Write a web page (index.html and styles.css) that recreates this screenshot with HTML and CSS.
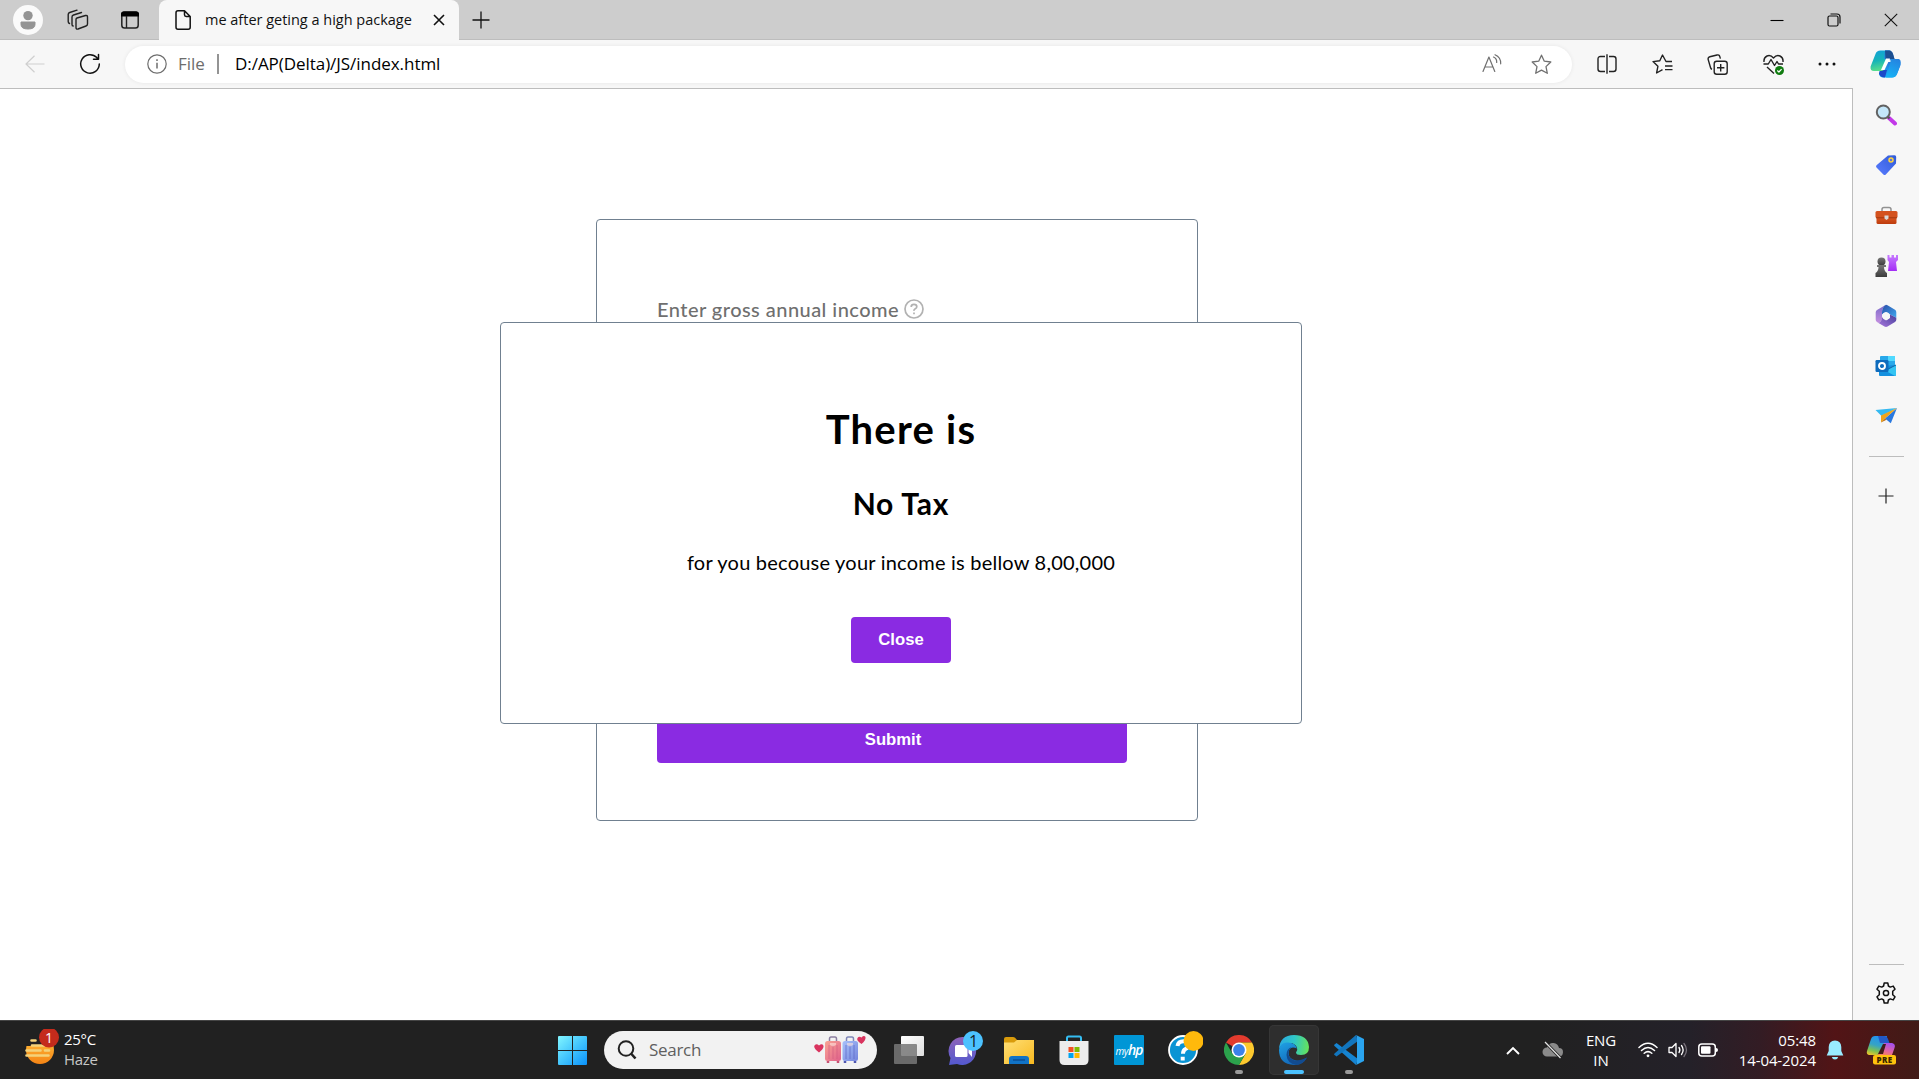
FILE: index.html
```html
<!DOCTYPE html>
<html lang="en">
<head>
<meta charset="utf-8">
<title>me after geting a high package</title>
<link rel="stylesheet" href="styles.css">
</head>
<body>
<svg class="defs" aria-hidden="true">
  <defs>
    <linearGradient id="win" x1="0" y1="0" x2="1" y2="1"><stop offset="0" stop-color="#82f6ff"/><stop offset=".5" stop-color="#43c5fd"/><stop offset="1" stop-color="#0a91fb"/></linearGradient>
    <linearGradient id="copA" x1=".2" y1="0" x2=".4" y2="1"><stop offset="0" stop-color="#12a0d8"/><stop offset=".5" stop-color="#16b4b8"/><stop offset="1" stop-color="#5ce08a"/></linearGradient>
    <linearGradient id="copB" x1=".7" y1="0" x2=".4" y2="1"><stop offset="0" stop-color="#2a72d8"/><stop offset="1" stop-color="#17b1f5"/></linearGradient>
    <linearGradient id="preA" x1=".5" y1="0" x2=".2" y2="1"><stop offset="0" stop-color="#2392ee"/><stop offset=".45" stop-color="#35a3c6"/><stop offset=".75" stop-color="#7cc152"/><stop offset="1" stop-color="#ecc52b"/></linearGradient>
    <linearGradient id="preB" x1=".7" y1="0" x2=".3" y2="1"><stop offset="0" stop-color="#a34ff0"/><stop offset=".6" stop-color="#df63a5"/><stop offset="1" stop-color="#f5805e"/></linearGradient>
    <linearGradient id="tag" x1="1" y1="0" x2="0" y2="1"><stop offset="0" stop-color="#2f5bd8"/><stop offset="1" stop-color="#5a7cff"/></linearGradient>
    <linearGradient id="box" x1="0" y1="0" x2="0" y2="1"><stop offset="0" stop-color="#e5622a"/><stop offset="1" stop-color="#bd3b0c"/></linearGradient>
    <linearGradient id="rook" x1="0" y1="0" x2="0" y2="1"><stop offset="0" stop-color="#c67bff"/><stop offset="1" stop-color="#a32df5"/></linearGradient>
    <linearGradient id="pawn" x1="0" y1="0" x2="0" y2="1"><stop offset="0" stop-color="#777"/><stop offset="1" stop-color="#3c3c3c"/></linearGradient>
    <linearGradient id="swirlLeft" x1="0" y1="0" x2="0" y2="1"><stop offset="0" stop-color="#7a6ac9"/><stop offset="1" stop-color="#c48fe0"/></linearGradient>
    <linearGradient id="swirlTop" x1="0" y1="0" x2="1" y2="1"><stop offset="0" stop-color="#2b4fa8"/><stop offset="1" stop-color="#3fa8f0"/></linearGradient>
    <linearGradient id="swirlLow" x1="0" y1="1" x2="1" y2="0"><stop offset="0" stop-color="#a877dc"/><stop offset="1" stop-color="#463f9c"/></linearGradient>
    <linearGradient id="chat" x1="0" y1="0" x2="0" y2="1"><stop offset="0" stop-color="#8f63b8"/><stop offset="1" stop-color="#5359cf"/></linearGradient>
    <linearGradient id="folder" x1="0" y1="0" x2="1" y2="1"><stop offset="0" stop-color="#ffdf76"/><stop offset="1" stop-color="#f8b91f"/></linearGradient>
    <linearGradient id="view" x1="0" y1="0" x2="1" y2="1"><stop offset="0" stop-color="#fff"/><stop offset="1" stop-color="#dedede"/></linearGradient>
    <linearGradient id="edgeTop" x1="0" y1=".4" x2="1" y2=".5"><stop offset="0" stop-color="#2aa9e4"/><stop offset=".5" stop-color="#2fc7c5"/><stop offset="1" stop-color="#66e35a"/></linearGradient>
    <linearGradient id="edgeLow" x1="0" y1="0" x2=".6" y2="1"><stop offset="0" stop-color="#1fa2e5"/><stop offset="1" stop-color="#1263b5"/></linearGradient>
    <linearGradient id="haze" x1="0" y1="0" x2="0" y2="1"><stop offset="0" stop-color="#ffc13d"/><stop offset="1" stop-color="#f58415"/></linearGradient>
    <linearGradient id="pink" x1="0" y1="0" x2="1" y2="1"><stop offset="0" stop-color="#f9a493"/><stop offset="1" stop-color="#e0608b"/></linearGradient>
    <linearGradient id="blue" x1="0" y1="0" x2="1" y2="1"><stop offset="0" stop-color="#a8c2fb"/><stop offset="1" stop-color="#7484dc"/></linearGradient>
  </defs>
</svg>

<header class="tabstrip">
  <div class="cell profile"><svg width="30" height="30" viewBox="0 0 30 30"><circle cx="15" cy="15" r="15" fill="#fafafa"/><circle cx="15" cy="10.6" r="4.7" fill="#949494"/><path d="M8 17h14v2.500q0 4.500-7 4.500t-7-4.500z" fill="#949494" stroke="#949494" stroke-linejoin="round"/></svg></div>
  <div class="cell spaces"><svg width="22" height="22" viewBox="0 0 22 22" fill="none" stroke="#222" stroke-width="1.400" stroke-linejoin="round" stroke-linecap="round"><path d="M10 9l8.500-2.500q2-.4 2 1.500v7q0 1.500-1.500 2L11 20q-2 .6-2-1.500V10.500q0-1.200 1-1.500z"/><path d="M6.200 17q-1.200 0-1.200-1.500V8q0-1.500 1.500-2l8-2.500"/><path d="M2.500 14.500Q1.200 14 1.200 12.500V5.500q0-1.500 1.500-2L10 1.200"/></svg></div>
  <div class="cell vertical"><svg width="20" height="20" viewBox="0 0 20 20"><rect x="1.800" y="2" width="16.400" height="16" rx="2.800" fill="none" stroke="#222" stroke-width="1.500"/><path d="M1 6.500V4q0-2.500 2.500-2.500h13Q19 1.500 19 4v2.500z" fill="#000"/><path d="M6.500 6v12" stroke="#222" stroke-width="1.400"/></svg></div>
  <div class="tab">
    <svg width="16" height="20" viewBox="0 0 16 20" fill="none" stroke="#111" stroke-width="1.500" stroke-linejoin="round"><path d="M3 .8h6.500l5.700 5.700v10.700q0 2-2 2H3q-2 0-2-2V2.800q0-2 2-2zM9.500.8v4q0 1.700 1.700 1.700h4"/></svg>
    <span class="tab-title">me after geting a high package</span>
    <svg class="tab-close" width="12" height="12" viewBox="0 0 12 12" stroke="#111" stroke-width="1.600"><path d="M1 1l10 10M11 1L1 11"/></svg>
  </div>
  <svg class="newtab" width="18" height="18" viewBox="0 0 18 18" stroke="#111" stroke-width="1.300"><path d="M9 .5v17M.5 9h17"/></svg>
  <div class="window-buttons">
    <svg width="14" height="14" viewBox="0 0 14 14"><path d="M.5 7.500h13" stroke="#000" stroke-width="1.100"/></svg>
    <svg width="14" height="14" viewBox="0 0 14 14" fill="none" stroke="#111" stroke-width="1.200"><rect x="1" y="3" width="10" height="10" rx="1.500"/><path d="M3.500 1H10q3 0 3 3v6.500"/></svg>
    <svg width="14" height="14" viewBox="0 0 14 14" stroke="#111" stroke-width="1.100"><path d="M.8.800l12.400 12.400M13.200.8L.8 13.200"/></svg>
  </div>
</header>

<nav class="toolbar">
  <div class="cell back"><svg width="20" height="18" viewBox="0 0 20 18" fill="none" stroke="#cfcfcf" stroke-width="1.200"><path d="M19.500 9H1M9.500.8L1 9l8.500 8.200"/></svg></div>
  <div class="cell refresh"><svg width="22" height="22" viewBox="0 0 22 22" fill="none" stroke="#111" stroke-width="1.500" stroke-linecap="round" stroke-linejoin="round"><path d="M20.300 11A9.300 9.300 0 1 1 17.800 4.600L19.300 6M19.500 1.500V6.200h-5"/></svg></div>
  <div class="address">
    <svg width="20" height="20" viewBox="0 0 20 20" fill="none" stroke="#6d6d6d" stroke-width="1.200"><circle cx="10" cy="10" r="9.200"/><path d="M10 8.800v5.700M10 5.300v1.800" stroke-width="1.500"/></svg>
    <span class="scheme">File</span><i class="bar"></i><span class="url">D:/AP(Delta)/JS/index.html</span>
    <span class="address-actions">
      <svg width="20" height="20" viewBox="0 0 20 20" fill="none" stroke="#707070" stroke-width="1.200" stroke-linecap="round" stroke-linejoin="round"><path d="M1 17.500L6.900 3l5.900 14.500M2.900 13h8M11.500 3q3.500 1.500 3.200 5.500M13 .8q6 2.500 5.700 9"/></svg>
      <svg width="21" height="21" viewBox="0 0 21 21" fill="none" stroke="#707070" stroke-width="1.300" stroke-linejoin="round"><path d="M10.500 1.200l2.800 6 6.500.8-4.800 4.600 1.300 6.700-5.800-3.200-5.800 3.200L6 12.600 1.200 8l6.500-.8z"/></svg>
    </span>
  </div>
  <div class="cell tool"><svg width="20" height="20" viewBox="0 0 20 20" fill="none" stroke="#222" stroke-width="1.400"><path d="M8 2.500H3.500q-2.500 0-2.500 2.500v10q0 2.500 2.500 2.500H8M12 2.500h4.500Q19 2.500 19 5v10q0 2.500-2.500 2.500H12M10 .3v19.400"/></svg></div>
  <div class="cell tool nudge"><svg width="21" height="20" viewBox="0 0 21 20" fill="none" stroke="#222" stroke-width="1.400" stroke-linejoin="round"><path d="M20 7.500h-6L10.500 1 7.800 6.700 1 7.600l4.900 4.700L4.600 19l5.900-3.300M13 12h7.500M13 15.600h7.500"/></svg></div>
  <div class="cell tool nudge"><svg width="21" height="21" viewBox="0 0 21 21" fill="none" stroke="#222" stroke-width="1.400" stroke-linejoin="round"><rect x="7.200" y="7.200" width="13" height="13" rx="2.500"/><path d="M13.700 10v7.400M10 13.700h7.400M5 15.300q-1.200-.5-1.500-1.800L1.200 5.600Q.6 3.400 2.800 2.800L10 1q2.300-.6 2.800 1.600l.6 2"/></svg></div>
  <div class="cell tool nudge"><svg width="21" height="21" viewBox="0 0 21 21" fill="none" stroke="#222" stroke-width="1.400" stroke-linejoin="round"><path d="M1 8Q.5 3.500 4 2t6.500 2Q13.500.500 17 2t3 6M.5 10h4.800L8 5.500l3.500 6L14 7.500 15.500 10H20M4 13l7 6.500"/><circle cx="16.500" cy="16.500" r="4.500" fill="#107c10" stroke="none"/><path d="M14.300 16.500l1.600 1.500 2.700-2.900" stroke="#fff" stroke-width="1.200"/></svg></div>
  <div class="cell tool"><svg width="18" height="6" viewBox="0 0 18 6" fill="#111"><circle cx="2" cy="3" r="1.500"/><circle cx="9" cy="3" r="1.500"/><circle cx="16" cy="3" r="1.500"/></svg></div>
  <div class="cell copilot"><svg width="31" height="28" viewBox="0 0 31 28"><path d="M13 12h16q2 1 1.200 4L27 24q-1.500 3.500-5 3.500H13q-3 0-4-3.500l2-7z" fill="url(#copB)"/><path d="M10 20h7l-2 7.500q-5 0-6-4z" fill="#1b4ac9"/><path d="M5.500 4Q6.500.500 10.500.500h10L15 18q-1 3-4 3H4Q0 21 .6 16.500z" fill="url(#copA)"/><path d="M15 .5h4q3 0 4 3.500l1.500 5H29q2.500 1 1.500 5.500L27 24q-1.500 3.500-5 3.500h-6l4.500-16Q21 9 18.500 9H14z" fill="url(#copB)"/><path d="M15 .5h4q3 0 4 3.500l1.500 5h-9z" fill="#1d4f91"/><path d="M16 8.500h4L14.500 20H11z" fill="#fff"/></svg></div>
</nav>

<div class="content">
  <main class="page">
    <section class="card">
      <label class="income-label">Enter gross annual income</label>
      <svg class="hint" width="20" height="20" viewBox="0 0 20 20" fill="none" stroke="#b2b2b2" stroke-width="1.700"><circle cx="10" cy="10" r="9"/><path d="M7.200 8q0-2.700 2.800-2.700T12.800 7.700q0 1.200-1.500 2T10 11.900M10 13.400v1.800"/></svg>
      <button class="submit">Submit</button>
    </section>
    <section class="modal">
      <h1>There is</h1>
      <h2>No Tax</h2>
      <p>for you becouse your income is bellow 8,00,000</p>
      <button class="close">Close</button>
    </section>
  </main>
  <aside class="sidebar">
    <svg width="22" height="22" viewBox="0 0 22 22"><path d="M14 14l6 5.500" stroke="#c239e8" stroke-width="4" stroke-linecap="round"/><path d="M12.500 12.500l2 2" stroke="#555" stroke-width="2"/><circle cx="8.300" cy="8" r="6.500" fill="#c4e7fa" stroke="#626262" stroke-width="2"/></svg>
    <svg width="22" height="22" viewBox="0 0 22 22"><path d="M13 1.500l6.500-.2q1.800 0 1.700 1.700L21 9.500 10.800 20.500q-1.200 1-2.400 0L1.500 13.600q-1-1.200 0-2.400z" fill="url(#tag)"/><circle cx="16" cy="6" r="2" fill="#5e75d7" stroke="#ffd33d" stroke-width="1.500"/></svg>
    <svg width="23" height="22" viewBox="0 -1 23 22"><path d="M7 6V4.500Q7 2.500 9 2.500h5q2 0 2 2V6" fill="none" stroke="#929292" stroke-width="1.500"/><rect x="1.500" y="10" width="20" height="9" rx="1.500" fill="url(#box)"/><rect x=".5" y="6" width="22" height="7" rx="1.500" fill="#d4521e"/><path d="M1 12.800h21" stroke="#a2380f"/><path d="M9.500 10.500h4v3l-2 1.500-2-1.500z" fill="#d9d9d9"/></svg>
    <svg width="24" height="24" viewBox="0 0 24 24"><path d="M13.500 1h2v2.500h2V1h2.500v2.500h2V1H24v5l-2 2 1 9h-9l1-9-1.500-2z" fill="url(#rook)"/><circle cx="7.500" cy="7.500" r="4" fill="url(#pawn)"/><path d="M3 11h9v2H10q0 4 3 6v4H1.500v-4q3-2 3-6H3z" fill="url(#pawn)"/></svg>
    <svg width="22" height="24" viewBox="0 0 22 24"><path d="M11 .8L2 6Q.7 6.800.7 8.300v7.400q0 1.500 1.300 2.300l1.500.9Q7.500 17 7 13V8.500Q7 4 11 .8z" fill="url(#swirlLeft)"/><path d="M11 .8q1 0 1.500.4L20 5.700q1.300.8 1.300 2.600v5.500L15 10.500 11 8l-4 2.500V8.300Q7.300 3 11 .8z" fill="url(#swirlTop)"/><path d="M3.500 18.900Q7 17.500 7 13l4 3.500 4-2.500V10.500l6.300 3.300v2q0 1.500-1.300 2.300l-7.500 4.400q-1.500.8-3 0z" fill="url(#swirlLow)"/><circle cx="11" cy="12" r="3.700" fill="#f7f7f7"/></svg>
    <svg width="22" height="22" viewBox="0 0 22 22"><rect x="5" y="1" width="15" height="14" rx="1" fill="#28a8ea"/><path d="M13 1h7v5h-7z" fill="#50d9ff"/><path d="M4 11l17-1v10q0 1-1 1H5q-1 0-1-1z" fill="#1490df"/><path d="M21 10v10q0 1-1 1l-9-5z" fill="#34c4f2"/><path d="M11 15l10-5" stroke="#1367a8"/><rect x=".5" y="5" width="13" height="12" rx="1.200" fill="#0f6cbd"/><circle cx="7" cy="11" r="3" fill="none" stroke="#fff" stroke-width="1.900"/></svg>
    <svg width="23" height="20" viewBox="0 0 23 20"><path d="M.5 4L22 2 6.500 10z" fill="#35b9f1"/><path d="M22 2L10 12.500l5.800 4.700z" fill="#2978df"/><path d="M22 2L6 9.500v7l4-4z" fill="#f0a51b"/><path d="M6 16.500l4-4 1.500 1.200z" fill="#b96b12"/></svg>
    <i class="rule"></i>
    <svg class="plus" width="16" height="16" viewBox="0 0 16 16" stroke="#222" stroke-width="1.200"><path d="M8 .5v15M.5 8h15"/></svg>
    <i class="rule lower"></i>
    <svg class="gear" width="22" height="22" viewBox="0 0 22 22" fill="none" stroke="#111" stroke-width="1.500" stroke-linejoin="round"><path d="M9.200 1h3.600l.6 3 1.900 1.100 2.900-1L20 7.200l-2.300 2v3.600l2.300 2-1.800 3.100-2.900-1-1.900 1.100-.6 3H9.200l-.6-3-1.900-1.100-2.900 1L2 14.800l2.300-2V9.200L2 7.200l1.800-3.100 2.900 1L8.600 4z"/><circle cx="11" cy="11" r="2.600"/></svg>
  </aside>
</div>

<footer class="taskbar">
  <div class="weather">
    <svg width="34" height="38" viewBox="0 0 34 38"><circle cx="15" cy="21" r="14" fill="url(#haze)"/><path d="M0 6h30v11H0z" fill="#212121"/><g stroke="#f4d27a" stroke-width="2.600" stroke-linecap="round"><path d="M6.500 11.500h4M7 16.500h19M1.500 21.500h14M20 21.500h4M1.500 26.500h22"/></g><circle cx="24" cy="8.500" r="10" fill="#c42b1c"/><text x="24" y="13.500" text-anchor="middle" class="badge-light">1</text></svg>
    <div class="weather-text"><span>25°C</span><span class="dim">Haze</span></div>
  </div>
  <div class="start"><svg width="29" height="29" viewBox="0 0 29 29"><path d="M0 1q0-1 1-1h13v14H0zM15 0h13q1 0 1 1v13H15zM0 15h14v14H1q-1 0-1-1zM15 15h14v13q0 1-1 1H15z" fill="url(#win)"/></svg></div>
  <div class="search">
    <svg width="20" height="20" viewBox="0 0 20 20" fill="none" stroke="#222" stroke-width="2"><circle cx="9" cy="8.500" r="7.300"/><path d="M14 13.500l4.500 5" stroke-width="2.600"/></svg>
    <span>Search</span>
    <svg class="luggage" width="52" height="30" viewBox="0 0 52 30"><path d="M5 17.500Q-1 13 .5 10.500 2.500 8 5 10.500 8 8 9.500 10.700 10 14 5 17.500z" fill="#d9345f"/><path d="M47.500 9Q42 5.500 43.500 3q1.500-2 4-.5 2.500-2.500 4-.5Q52 5.500 47.500 9z" fill="#d9345f"/><path d="M15.500 7V4q0-2 1.500-2h4q1.500 0 1.500 2v3" fill="none" stroke="#8c7fa0" stroke-width="1.500"/><rect x="11" y="6" width="16" height="20" rx="2.500" fill="url(#pink)"/><path d="M15 10v14M19 10v14M23 10v14" stroke="#d05a80" opacity=".6"/><path d="M14 26v2M24 26v2" stroke="#c65374" stroke-width="2.500"/><path d="M32.500 7V4q0-2 1.500-2h4q1.500 0 1.500 2v3" fill="none" stroke="#7f86b8" stroke-width="1.500"/><rect x="28.500" y="6" width="15.500" height="20" rx="2.500" fill="url(#blue)"/><path d="M32 10v14M36 10v14M40 10v14" stroke="#5d66c6" opacity=".7"/><path d="M31 26v2M41 26v2" stroke="#4f56b0" stroke-width="2.500"/><path d="M16 8h6v2l-3 1.500L16 10zM33 8h6v2l-3 1.500L33 10z" fill="#fde2dc" opacity=".6"/></svg>
  </div>
  <div class="apps">
    <div class="app"><svg width="30" height="30" viewBox="0 0 30 30"><rect x="7" y="1" width="23" height="20" rx="1" fill="url(#view)"/><rect x="0" y="9" width="23" height="20" rx="1" fill="#777" opacity=".85"/></svg></div>
    <div class="app"><svg width="38" height="38" viewBox="0 0 38 38"><path d="M18 6a14 14 0 1 1-6 27l-8 1 1.500-7A14 14 0 0 1 18 6z" fill="url(#chat)"/><rect x="10" y="14" width="12.500" height="12" rx="1.500" fill="#fff"/><path d="M23.500 18l3.500-4v12l-3.500-4z" fill="#fff"/><circle cx="29" cy="8.800" r="8.800" fill="none" stroke="none"/><circle cx="28" cy="10" r="10" fill="#4cc2ff"/><text x="28.500" y="15.500" text-anchor="middle" class="badge-dark">1</text></svg></div>
    <div class="app"><svg width="30" height="30" viewBox="0 0 30 30"><path d="M0 4q0-2 2-2h7q1.200 0 2 .8L14 6v6H0z" fill="#d99b0b"/><path d="M0 7.500h10L13 5h17v24H0z" fill="url(#folder)"/><path d="M5 29v-5q0-3 3-3h14q3 0 3 3v5z" fill="#1173c6"/><path d="M9 25h12" stroke="#0b4e95" stroke-width="1.500"/></svg></div>
    <div class="app"><svg width="30" height="30" viewBox="0 0 30 30"><path d="M8 7V3q0-1.500 1.500-1.500h11Q22 1.500 22 3v4" fill="none" stroke="#35bdf2" stroke-width="2"/><path d="M.5 6h29v19q0 5-5 5h-19q-5 0-5-5z" fill="#ececec"/><path fill="#f25022" d="M9.500 12h5v5h-5z"/><path fill="#7fba00" d="M15.500 12h5v5h-5z"/><path fill="#00a4ef" d="M9.500 18h5v5h-5z"/><path fill="#ffb900" d="M15.500 18h5v5h-5z"/></svg></div>
    <div class="app"><div class="myhp">my<b>hp</b></div></div>
    <div class="app"><svg width="38" height="38" viewBox="0 0 38 38"><circle cx="18" cy="19" r="14" fill="#0a94d4" stroke="#fff" stroke-width="1.800"/><path d="M12.500 15q.8-5 6.500-4.800 5.500.3 4.800 4.300-.4 2.200-3.300 3.500Q18 19.300 18 22.800M17.700 25.800v3.700" fill="none" stroke="#fff" stroke-width="4"/><circle cx="28.500" cy="10" r="10" fill="#ffb90c"/></svg></div>
    <div class="app running"><svg width="30" height="30" viewBox="0 0 30 30"><path d="M15 15L2 7.500A15 15 0 0 1 28 7.500H15z" fill="#e33b2e"/><path d="M28 7.500A15 15 0 0 1 15 30l6.500-11.300Q23 13 15 7.500z" fill="#fdc92e"/><path d="M2 7.500A15 15 0 0 0 15 30l6.500-11.300L15 20 8.500 18.700z" fill="#2ba24c"/><circle cx="15" cy="15" r="7.500" fill="#fff"/><circle cx="15" cy="15" r="5.900" fill="#3b82ea"/></svg></div>
    <div class="app running active"><svg width="30" height="30" viewBox="0 0 30 30"><path d="M0 14Q1 0 15 0q14 0 15 12 0 8-8 8-5 0-5-2.500 2-2 1-5-3-6-10-4Q1 10 0 14z" fill="url(#edgeTop)"/><path d="M0 15Q1 7 9 7.500q7 0 9 6-6-3-8 2-2 8 7 10 6 1 11-3-5 8-13 7.500Q0 29 0 15z" fill="url(#edgeLow)"/><path d="M12.500 12Q8 16 10 21q4 8 18 1.500-4 7.500-11 7.500Q8 28 7.500 20 7.500 14 12.500 12z" fill="#124b8f"/></svg></div>
    <div class="app running"><svg width="30" height="30" viewBox="0 0 30 30"><path d="M0 10l2.500-2L24 24l-2 6L.5 11z" fill="#1684d1"/><path d="M0 19.500l2.500 2L24 6l-2-6L.5 18.500z" fill="#1275bd"/><path d="M22 0l8 4v22l-8 4q1-1 1-3V3q0-2-1-3z" fill="#2aa4ef"/></svg></div>
  </div>
  <div class="tray">
    <svg class="chevron" width="14" height="9" viewBox="0 0 14 9" fill="none" stroke="#fff" stroke-width="1.900"><path d="M1 8l6-6 6 6"/></svg>
    <svg class="cloud" width="22" height="18" viewBox="0 0 22 18"><path d="M5 15.500a4.500 4.500 0 0 1 0-9q2-5 6.500-4.500t5.500 5q4 0 4 4.200-.3 4.300-4 4.300z" fill="#8a8a8a"/><path d="M3.500 1.500l15 15.500" stroke="#222" stroke-width="3"/><path d="M3 1l15.500 16" stroke="#e5e5e5" stroke-width="1.200"/></svg>
    <div class="lang"><span>ENG</span><span>IN</span></div>
    <svg class="wifi" width="20" height="16" viewBox="0 0 20 16" fill="none" stroke="#fff" stroke-width="1.500" stroke-linecap="round"><path d="M1 5.500q9-8.500 18 0M3.500 8.500q6.500-6 13 0M6.200 11.300q3.800-3.300 7.600 0"/><circle cx="10" cy="13.800" r="1.400" fill="#fff" stroke="none"/></svg>
    <svg class="speaker" width="20" height="16" viewBox="0 0 20 16" fill="none" stroke="#fff" stroke-width="1.300" stroke-linejoin="round" stroke-linecap="round"><path d="M1 5.500h3L8 1.500v13l-4-4H1zM11 5.500q1.800 2.500 0 5M13.500 3.500q3.300 4.500 0 9"/><path d="M16 1.500q5 6.500 0 13" stroke="#77717a"/></svg>
    <svg class="battery" width="20" height="14" viewBox="0 0 20 14"><rect x=".8" y="1" width="16.500" height="12" rx="3" fill="none" stroke="#fff" stroke-width="1.500"/><rect x="3" y="3.300" width="9.500" height="7.500" rx="1" fill="#fff"/><path d="M18 5q2 0 2 2t-2 2z" fill="#fff"/></svg>
    <div class="clock"><span>05:48</span><span>14-04-2024</span></div>
    <svg class="bell" width="18" height="20" viewBox="0 0 18 20" fill="#99ebff"><path d="M9 .5q6 .4 6.300 6.500v4l2 4.500H.7l2-4.500V7Q3 .9 9 .5zM5.800 17h6.400Q11.500 19.500 9 19.500T5.800 17z"/></svg>
    <svg class="pre" width="30" height="30" viewBox="0 0 30 30"><path d="M5 4Q6 1 9 1h12l-6 16q-1 3-4 3H3q-3-1-2-4z" fill="url(#preA)"/><path d="M12 1h6q3 0 4 3l1.500 4H14z" fill="#2258c6"/><path d="M18 8h8q4 1 2.500 5L26 20H12z" fill="url(#preB)"/><path d="M17 9h3l-3 10h-5z" fill="#421c19"/><rect x="7" y="20" width="23" height="9.500" rx="2" fill="#ffc20d"/><text x="18.500" y="28" text-anchor="middle" class="pre-text">PRE</text></svg>
  </div>
</footer>
</body>
</html>
```
FILE: styles.css
```css
* { box-sizing: border-box; }
body {
  margin: 0;
  width: 1919px;
  height: 1079px;
  overflow: hidden;
  display: flex;
  flex-direction: column;
  background: #fff;
  font-family: "Open Sans", "Noto Sans", sans-serif;
  color: #111;
}
svg { display: block; flex: none; }
.defs { position: absolute; width: 0; height: 0; }
.cell { display: flex; align-items: center; justify-content: center; flex: none; }

/* Tab strip */
.tabstrip {
  flex: none;
  height: 40px;
  display: flex;
  align-items: center;
  background: #cdcdcd;
  border-bottom: 1px solid #bdbdbd;
}
.profile { width: 56px; }
.spaces { width: 44px; }
.vertical { width: 59px; }
.tab {
  align-self: stretch;
  width: 300px;
  margin-bottom: -1px;
  padding: 0 14px 0 16px;
  display: flex;
  align-items: center;
  background: #f7f7f7;
  border-radius: 8px 8px 0 0;
}
.tab-title {
  margin: 0 0 2px 14px;
  width: 220px;
  white-space: nowrap;
  font-size: 14.5px;
  letter-spacing: -.01px;
}
.tab-close { margin-left: auto; }
.newtab { margin-left: 13px; }
.window-buttons { margin: 0 21px 0 auto; display: flex; gap: 43px; }

/* Toolbar */
.toolbar {
  flex: none;
  height: 48px;
  display: flex;
  align-items: center;
  background: #f7f7f7;
}
.back { width: 70px; }
.refresh { width: 40px; }
.address {
  width: 1447px;
  height: 37px;
  margin: 0 7px 0 15px;
  padding: 0 20px 0 22px;
  display: flex;
  align-items: center;
  background: #fff;
  border-radius: 19px;
  box-shadow: 0 0 4px rgba(0, 0, 0, .07);
}
.scheme, .url { padding-bottom: 2px; font-size: 17px; white-space: nowrap; letter-spacing: -.05px; }
.scheme { margin-left: 11px; width: 27px; color: #6d6d6d; }
.bar { margin-left: 12px; width: 2px; height: 20px; background: #949494; }
.url { margin-left: 16px; color: #000; }
.address-actions { margin-left: auto; display: flex; align-items: center; gap: 29px; }
.tool { width: 55.200px; }
.nudge { padding-left: 2px; }
.copilot { width: 61px; }

/* Content and side bar */
.content { flex: none; height: 932px; display: flex; }
.page {
  position: relative;
  width: 1853px;
  border-top: 1px solid #bdbdbd;
  border-right: 1px solid #bdbdbd;
  background: #fff;
}
.card {
  width: 602px;
  height: 602px;
  margin: 130px 0 0 596px;
  padding: 75px 69px 57px 60px;
  display: flex;
  flex-wrap: wrap;
  align-content: space-between;
  border: 1px solid #708090;
  border-radius: 4px;
}
.income-label {
  height: 28px;
  line-height: 28px;
  width: 247px;
  white-space: nowrap;
  font-family: Lato, sans-serif;
  font-weight: 500;
  font-size: 20px;
  letter-spacing: .46px;
  color: #6f6f6f;
}
.hint { margin-top: 4px; }
.submit, .close {
  border: 0;
  height: 46px;
  padding: 0;
  border-radius: 4px;
  background: #8a2be2;
  color: #fff;
  font: bold 16.670px "Liberation Sans", sans-serif;
}
.submit { width: 470px; padding-left: 2px; }
.modal {
  position: absolute;
  left: 500px;
  top: 233px;
  width: 802px;
  height: 402px;
  padding-top: 78px;
  display: flex;
  flex-direction: column;
  align-items: center;
  background: #fff;
  border: 1px solid #708090;
  border-radius: 4px;
  font-family: Lato, sans-serif;
  color: #000;
}
.modal h1, .modal h2, .modal p { margin: 0; white-space: nowrap; }
.modal h1 { font-size: 40px; line-height: 56px; letter-spacing: 1.250px; }
.modal h2 { margin-top: 26px; font-size: 30px; line-height: 40px; letter-spacing: .8px; }
.modal p { margin-top: 25px; font-size: 20px; line-height: 28px; letter-spacing: .22px; }
.close { margin-top: 41px; width: 100px; }

.sidebar {
  width: 66px;
  padding-top: 15px;
  display: flex;
  flex-direction: column;
  align-items: center;
  background: #f7f7f7;
}
.sidebar > svg { height: 24px; margin-bottom: 26.200px; }
.rule { flex: none; width: 35px; height: 1px; margin-top: 2px; background: #bdbdbd; }
.sidebar > .plus { height: 16px; margin: 31px 0 0; }
.lower { margin-top: auto; }
.sidebar > .gear { height: 22px; margin: 17px 0 16px; }

/* Taskbar */
.taskbar {
  flex: none;
  height: 59px;
  display: flex;
  align-items: center;
  border-top: 1px solid #454545;
  background: linear-gradient(90deg, #212121 0, #212121 1540px, #242129 1690px, #331c24 1760px, #521416 1835px, #411b17 1919px);
  color: #fff;
  font-size: 15px;
  line-height: 20px;
}
.weather { width: 558px; padding: 0 0 2px 25px; display: flex; }
.weather-text { margin-left: 5px; display: flex; flex-direction: column; letter-spacing: -.3px; }
.dim { color: #c7c7c7; }
.badge-light, .badge-dark { font-size: 14px; fill: #fff; }
.badge-dark { font-size: 16px; fill: #14222b; }
.start { width: 46px; padding-top: 1px; }
.search {
  width: 273px;
  height: 38px;
  padding: 0 11px 0 13px;
  display: flex;
  align-items: center;
  background: #f2f2f2;
  border-radius: 19px;
  color: #5f5f5f;
  font-size: 17px;
}
.search span { margin-left: 12px; letter-spacing: -.3px; }
.luggage { margin-left: auto; }
.apps { margin-left: 7px; display: flex; gap: 5px; }
.app {
  position: relative;
  width: 50px;
  height: 50px;
  display: flex;
  align-items: center;
  justify-content: center;
}
.active { background: #2e2e2e; border-radius: 5px; box-shadow: inset 0 0 0 1px #363636; }
.running::after {
  content: "";
  position: absolute;
  left: 21px;
  bottom: 1px;
  width: 8px;
  height: 4px;
  border-radius: 2px;
  background: #9a9a9a;
}
.active::after { left: 15px; width: 20px; background: #4cc2ff; }
.myhp {
  width: 30px;
  height: 30px;
  border-radius: 1px;
  background: #0096d6;
  text-align: center;
  font: italic 10px/29px "Open Sans", sans-serif;
  letter-spacing: -.5px;
}
.myhp b { font-size: 14px; font-weight: 600; letter-spacing: -1px; }
.tray { margin: 0 23px 0 auto; display: flex; align-items: center; }
.cloud { margin-left: 22px; }
.lang { width: 32px; margin-left: 21px; text-align: center; }
.lang, .clock { padding-bottom: 1px; }
.lang span, .clock span { display: block; letter-spacing: -.1px; }
.wifi { margin-left: 21px; }
.speaker { margin-left: 10px; }
.battery { margin-left: 10px; }
.clock { width: 82px; margin-left: 16px; display: flex; flex-direction: column; align-items: flex-end; }
.bell { margin-left: 10px; }
.pre { margin-left: 22px; }
.pre-text { font-size: 8px; font-weight: 800; fill: #3a2500; letter-spacing: .3px; }
```
